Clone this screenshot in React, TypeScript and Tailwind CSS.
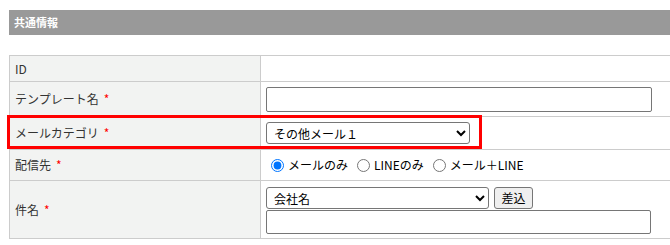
import React from 'react'

const font = '"Noto Sans CJK JP", "Liberation Sans", sans-serif'

function Req() {
  return <span className="ml-[5px] text-[#ff0000]">*</span>
}

function Row({
  label,
  required,
  h,
  children,
  last,
}: {
  label: string
  required?: boolean
  h: string
  children?: React.ReactNode
  last?: boolean
}) {
  return (
    <div className={`flex border-b border-[#cccccc] ${h} ${last ? '' : ''}`}>
      <div className="w-[251px] shrink-0 flex items-center pl-[5px] bg-[#f2f3f2] border-r border-[#cccccc]">
        {label}
        {required && <Req />}
      </div>
      <div className="flex-1 pl-[5px]">{children}</div>
    </div>
  )
}

export default function App() {
  return (
    <div
      className="w-[670px] h-[245px] overflow-hidden bg-white text-[12px] text-[#333333]"
      style={{ fontFamily: font }}
    >
      <div className="pl-[9px] pt-[10px] w-[700px]">
        {/* 見出し */}
        <div className="h-[25px] bg-[#999999] flex items-center pl-[5px] text-white font-bold text-[11px]">
          共通情報
        </div>

        {/* フォーム */}
        <div className="mt-[20px] border-t border-l border-[#cccccc]">
          <Row label="ID" h="h-[26px]" />

          <Row label="テンプレート名" required h="h-[35px]">
            <div className="pt-[5px]">
              <input
                type="text"
                className="block w-[386px] h-[25px] border border-[#767676] rounded-[2px] bg-white"
              />
            </div>
          </Row>

          <div className="relative">
            <Row label="メールカテゴリ" required h="h-[33px]">
              <div className="pt-[5px]">
                <select
                  defaultValue="その他メール１"
                  className="block w-[204px] h-[22px] border border-[#767676] rounded-[3px] bg-white text-[12px] pl-[3px] text-black"
                >
                  <option>その他メール１</option>
                </select>
              </div>
            </Row>
            <div className="absolute left-[-3px] top-[-2px] w-[475px] h-[34px] border-[3px] border-[#ff0000] pointer-events-none" />
          </div>

          <Row label="配信先" required h="h-[31px]">
            <div className="h-full flex items-center text-black">
              <label className="flex items-center">
                <input type="radio" name="dest" defaultChecked className="w-[13px] h-[13px] ml-[5px] mr-[4px]" />
                メールのみ
              </label>
              <label className="flex items-center ml-[4px]">
                <input type="radio" name="dest" className="w-[13px] h-[13px] ml-[5px] mr-[4px]" />
                LINEのみ
              </label>
              <label className="flex items-center ml-[4px]">
                <input type="radio" name="dest" className="w-[13px] h-[13px] ml-[5px] mr-[4px]" />
                メール＋LINE
              </label>
            </div>
          </Row>

          <Row label="件名" required h="h-[58px]">
            <div className="pt-[6px] flex flex-col gap-[1px]">
              <div className="flex items-center gap-[5px]">
                <select
                  defaultValue="会社名"
                  className="block w-[223px] h-[22px] border border-[#767676] rounded-[3px] bg-white text-[12px] pl-[3px] text-black"
                >
                  <option>会社名</option>
                </select>
                <button className="w-[39px] h-[22px] border border-[#767676] rounded-[3px] bg-[#efefef] text-[12px] text-black">
                  差込
                </button>
              </div>
              <input
                type="text"
                className="block w-[385px] h-[24px] border border-[#767676] rounded-[2px] bg-white"
              />
            </div>
          </Row>
        </div>
      </div>
    </div>
  )
}
